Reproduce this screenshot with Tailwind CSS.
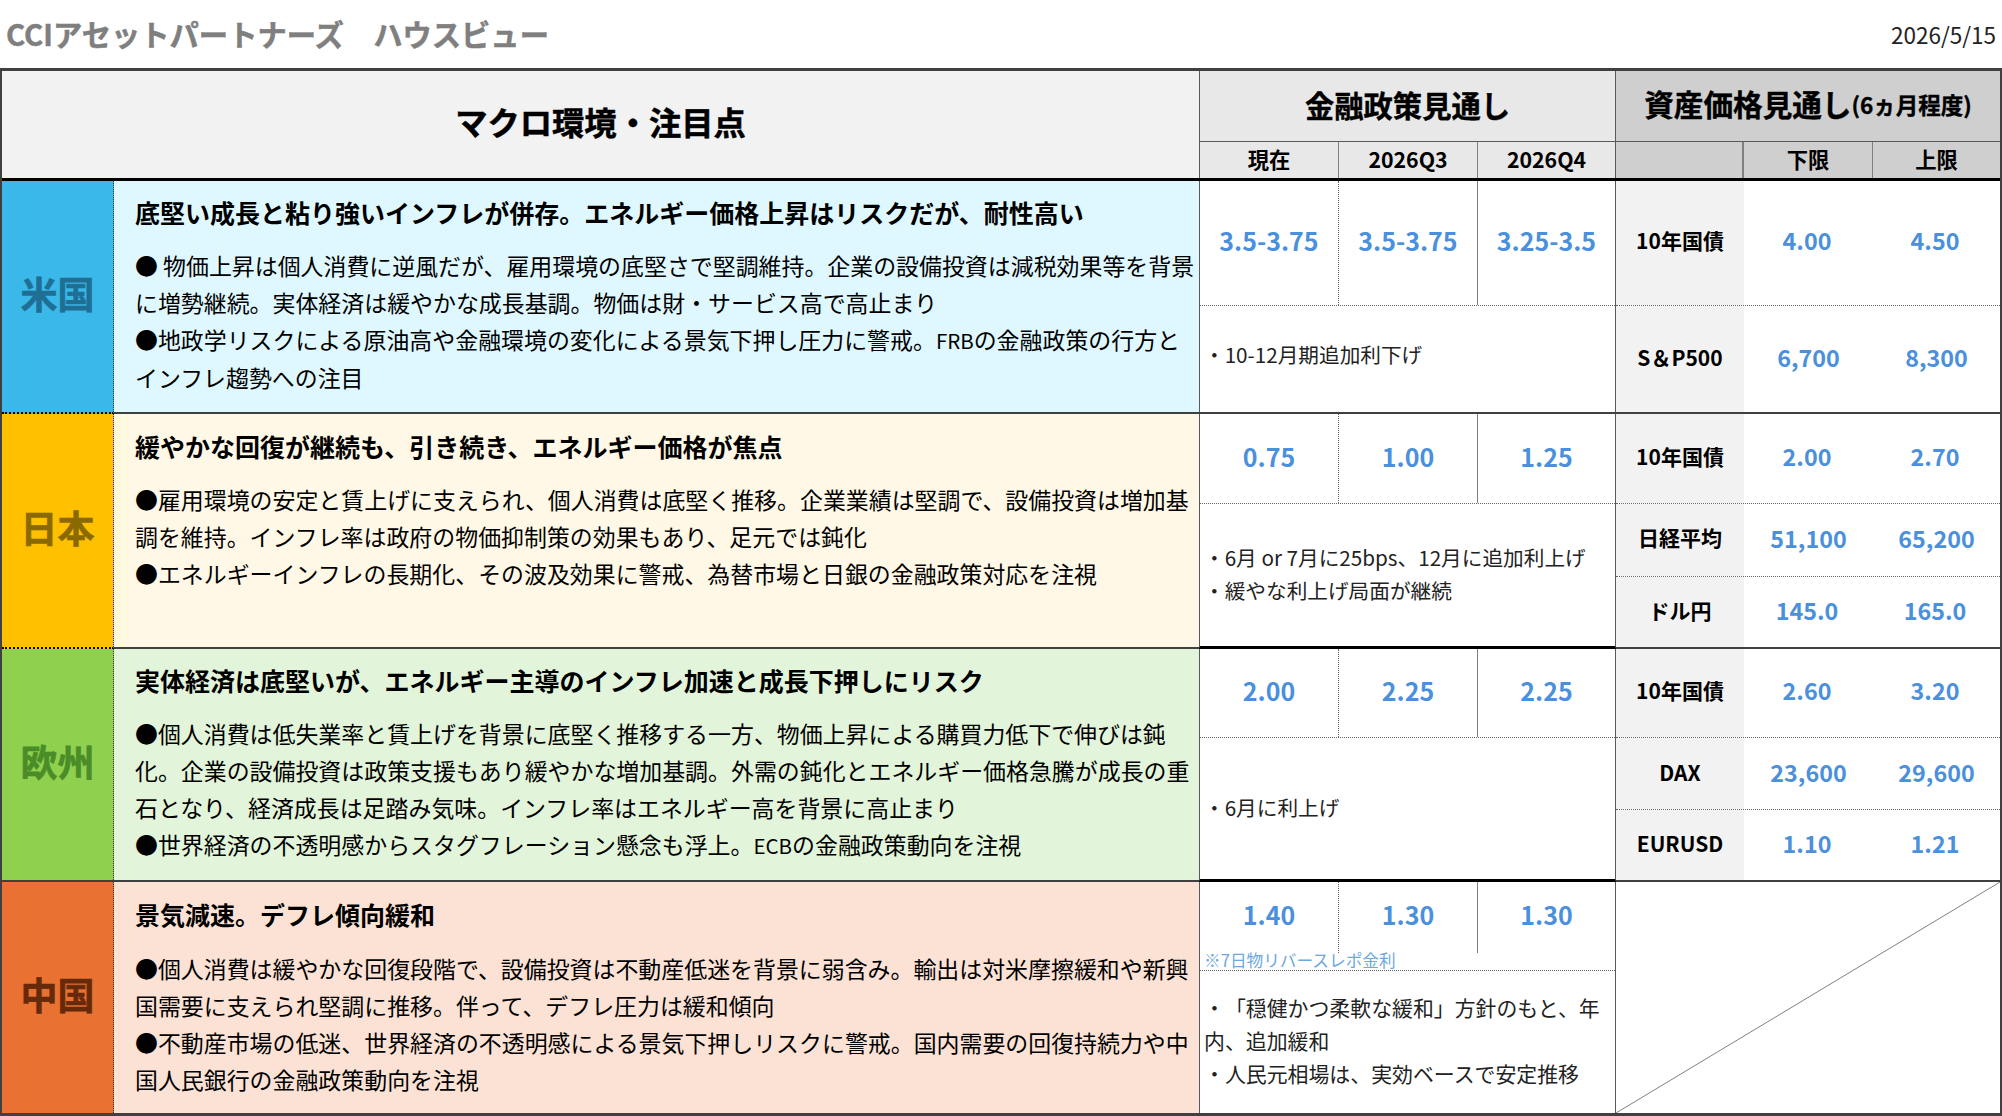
<!doctype html>
<html lang="ja">
  <head>
    <meta charset="utf-8" />
    <title>ハウスビュー</title>
    <script src="https://cdn.jsdelivr.net/npm/@tailwindcss/browser@4"></script>
  </head>
  <body class="bg-white">
    <div class="w-[2002px] h-[1116px] overflow-hidden font-['Noto_Sans_CJK_JP','Noto_Sans',sans-serif] text-black">
      <!-- title bar -->
      <div class="h-[68px] flex items-center justify-between pl-[6px] pr-[6px]">
        <div class="text-[29.3px] font-bold text-[#7f7f7f] leading-none whitespace-pre [-webkit-text-stroke:0.5px_#7f7f7f]">CCIアセットパートナーズ　ハウスビュー</div>
        <div class="text-[22.5px] text-[#222] leading-none">2026/5/15</div>
      </div>

      <!-- table -->
      <div class="h-[1048px] border-t-[3px] border-l-2 border-r-2 border-b-[3px] border-[#404040]">
        <!-- head -->
        <div class="flex h-[110px] border-b-[3px] border-black">
          <div class="w-[1198px] bg-[#f2f2f2] border-r border-[#595959] flex items-center justify-center pb-[7px] text-[32.3px] font-bold [-webkit-text-stroke:0.5px_#000]">マクロ環境・注目点</div>
          <div class="w-[416px] bg-[#e8e8e8] border-r border-[#595959] flex flex-col">
            <div class="h-[71px] flex items-center justify-center pb-[3px] text-[29.3px] font-bold border-b border-[#595959] [-webkit-text-stroke:0.4px_#000]">金融政策見通し</div>
            <div class="flex-1 grid grid-cols-[139px_139px_137px] text-[21.3px] font-bold text-center leading-[33px]">
              <div class="border-r border-[#808080]">現在</div>
              <div class="border-r border-[#808080]">2026Q3</div>
              <div>2026Q4</div>
            </div>
          </div>
          <div class="w-[384px] bg-[#cfcfcf] flex flex-col">
            <div class="h-[71px] flex items-center justify-center pb-[3px] font-bold border-b border-[#595959] text-[29.6px] whitespace-nowrap [-webkit-text-stroke:0.4px_#000]">資産価格見通し<span class="text-[22.5px]">(6ヵ月程度)</span></div>
            <div class="flex-1 grid grid-cols-[128px_129px_127px] text-[21.3px] font-bold text-center leading-[33px]">
              <div class="border-r-2 border-[#808080]"></div>
              <div class="border-r border-[#808080]">下限</div>
              <div>上限</div>
            </div>
          </div>
        </div>

        <!-- 米国 -->
        <div class="flex h-[233px] border-b-2 border-[#404040]">
          <div class="w-[112px] -mb-[2px] bg-[#3bb8ea] border-r border-dotted border-r-[#333] border-b-2 border-b-black flex items-center justify-center pb-[6px] text-[37px] font-bold text-[#1f6f94] [-webkit-text-stroke:0.6px_#1f6f94]">米国</div>
          <div class="w-[1085px] bg-[#dff8ff] pl-[21px] pt-[11px] whitespace-nowrap">
            <div class="text-[25px] font-bold leading-[40px]">底堅い成長と粘り強いインフレが併存。エネルギー価格上昇はリスクだが、耐性高い</div>
            <div class="mt-[15px] text-[22.93px] leading-[37px]">● 物価上昇は個人消費に逆風だが、雇用環境の底堅さで堅調維持。企業の設備投資は減税効果等を背景<br />に増勢継続。実体経済は緩やかな成長基調。物価は財・サービス高で高止まり<br />●地政学リスクによる原油高や金融環境の変化による景気下押し圧力に警戒。<span class="text-[20.5px]">FRB</span>の金融政策の行方と<br />インフレ趨勢への注目</div>
          </div>
          <div class="w-[417px] border-l border-r border-[#595959] flex flex-col">
            <div class="h-[125px] grid grid-cols-[139px_139px_137px] border-b border-dotted border-[#666] text-[25px] font-semibold text-[#4a90dc] text-center leading-[118px]">
              <div class="border-r border-dotted border-[#666]">3.5-3.75</div>
              <div class="border-r border-[#808080]">3.5-3.75</div>
              <div>3.25-3.5</div>
            </div>
            <div class="flex-1 flex items-center pl-[4px] pb-[10px] text-[20.67px] leading-[33px] text-[#222]">・10-12月期追加利下げ</div>
          </div>
          <div class="w-[384px] grid grid-rows-[125px_1fr] text-center">
            <div class="grid grid-cols-[128px_129px_127px] items-stretch border-b border-dotted border-[#666]">
              <div class="bg-[#f2f2f2] text-[21px] font-bold flex items-center justify-center pb-[5px]">10年国債</div>
              <div class="text-[23.3px] font-semibold text-[#4a90dc] flex items-center justify-center pb-[5px] pr-[3px]">4.00</div>
              <div class="text-[23.3px] font-semibold text-[#4a90dc] flex items-center justify-center pb-[5px] pr-[3px]">4.50</div>
            </div>
            <div class="grid grid-cols-[128px_129px_127px] items-stretch">
              <div class="bg-[#f2f2f2] text-[21px] font-bold flex items-center justify-center pb-[3px]">S＆P500</div>
              <div class="text-[23.3px] font-semibold text-[#4a90dc] flex items-center justify-center pb-[3px]">6,700</div>
              <div class="text-[23.3px] font-semibold text-[#4a90dc] flex items-center justify-center pb-[3px]">8,300</div>
            </div>
          </div>
        </div>

        <!-- 日本 -->
        <div class="flex h-[235px] border-b-2 border-[#404040]">
          <div class="w-[112px] -mb-[2px] bg-[#ffc000] border-r border-dotted border-r-[#333] border-b-2 border-b-black flex items-center justify-center pb-[6px] text-[37px] font-bold text-[#8a6a00] [-webkit-text-stroke:0.6px_#8a6a00]">日本</div>
          <div class="w-[1085px] bg-[#fff8e6] pl-[21px] pt-[12px] whitespace-nowrap">
            <div class="text-[25px] font-bold leading-[40px]">緩やかな回復が継続も、引き続き、エネルギー価格が焦点</div>
            <div class="mt-[15px] text-[22.93px] leading-[37px]">●雇用環境の安定と賃上げに支えられ、個人消費は底堅く推移。企業業績は堅調で、設備投資は増加基<br />調を維持。インフレ率は政府の物価抑制策の効果もあり、足元では鈍化<br />●エネルギーインフレの長期化、その波及効果に警戒、為替市場と日銀の金融政策対応を注視</div>
          </div>
          <div class="w-[417px] border-l border-r border-[#595959] border-b-[3px] border-b-black -mb-[2px] flex flex-col">
            <div class="h-[90px] grid grid-cols-[139px_139px_137px] border-b border-dotted border-[#666] text-[25px] font-semibold text-[#4a90dc] text-center leading-[84px]">
              <div class="border-r border-dotted border-[#666]">0.75</div>
              <div class="border-r border-[#808080]">1.00</div>
              <div>1.25</div>
            </div>
            <div class="flex-1 flex flex-col justify-center pl-[4px] pb-[2px] text-[20.67px] leading-[33px] text-[#222]">
              <div>・6月 or 7月に25bps、12月に追加利上げ</div>
              <div>・緩やな利上げ局面が継続</div>
            </div>
          </div>
          <div class="w-[384px] grid grid-rows-[90px_73px_1fr] text-center">
            <div class="grid grid-cols-[128px_129px_127px] items-stretch border-b border-dotted border-[#666]">
              <div class="bg-[#f2f2f2] text-[21px] font-bold flex items-center justify-center pb-[4px]">10年国債</div>
              <div class="text-[23.3px] font-semibold text-[#4a90dc] flex items-center justify-center pb-[4px] pr-[3px]">2.00</div>
              <div class="text-[23.3px] font-semibold text-[#4a90dc] flex items-center justify-center pb-[4px] pr-[3px]">2.70</div>
            </div>
            <div class="grid grid-cols-[128px_129px_127px] items-stretch border-b border-dotted border-[#666]">
              <div class="bg-[#f2f2f2] text-[21px] font-bold flex items-center justify-center pb-[4px]">日経平均</div>
              <div class="text-[23.3px] font-semibold text-[#4a90dc] flex items-center justify-center pb-[4px]">51,100</div>
              <div class="text-[23.3px] font-semibold text-[#4a90dc] flex items-center justify-center pb-[4px]">65,200</div>
            </div>
            <div class="grid grid-cols-[128px_129px_127px] items-stretch">
              <div class="bg-[#f2f2f2] text-[21px] font-bold flex items-center justify-center pb-[3px]">ドル円</div>
              <div class="text-[23.3px] font-semibold text-[#4a90dc] flex items-center justify-center pb-[3px] pr-[3px]">145.0</div>
              <div class="text-[23.3px] font-semibold text-[#4a90dc] flex items-center justify-center pb-[3px] pr-[3px]">165.0</div>
            </div>
          </div>
        </div>

        <!-- 欧州 -->
        <div class="flex h-[233px] border-b-2 border-[#404040]">
          <div class="w-[112px] bg-[#8fd14f] border-r border-dotted border-[#333] flex items-center justify-center pb-[6px] text-[37px] font-bold text-[#4a8c28] [-webkit-text-stroke:0.6px_#4a8c28]">欧州</div>
          <div class="w-[1085px] bg-[#e2f4da] pl-[21px] pt-[11px] whitespace-nowrap">
            <div class="text-[25px] font-bold leading-[40px]">実体経済は底堅いが、エネルギー主導のインフレ加速と成長下押しにリスク</div>
            <div class="mt-[15px] text-[22.93px] leading-[37px]">●個人消費は低失業率と賃上げを背景に底堅く推移する一方、物価上昇による購買力低下で伸びは鈍<br />化。企業の設備投資は政策支援もあり緩やかな増加基調。外需の鈍化とエネルギー価格急騰が成長の重<br />石となり、経済成長は足踏み気味。インフレ率はエネルギー高を背景に高止まり<br />●世界経済の不透明感からスタグフレーション懸念も浮上。<span class="text-[20.5px]">ECB</span>の金融政策動向を注視</div>
          </div>
          <div class="w-[417px] border-l border-r border-[#595959] border-b-[3px] border-b-black -mb-[2px] flex flex-col">
            <div class="h-[89px] grid grid-cols-[139px_139px_137px] border-b border-dotted border-[#666] text-[25px] font-semibold text-[#4a90dc] text-center leading-[83px]">
              <div class="border-r border-dotted border-[#666]">2.00</div>
              <div class="border-r border-[#808080]">2.25</div>
              <div>2.25</div>
            </div>
            <div class="flex-1 flex items-center pl-[4px] pb-[2px] text-[20.67px] leading-[33px] text-[#222]">・6月に利上げ</div>
          </div>
          <div class="w-[384px] grid grid-rows-[89px_72px_1fr] text-center">
            <div class="grid grid-cols-[128px_129px_127px] items-stretch border-b border-dotted border-[#666]">
              <div class="bg-[#f2f2f2] text-[21px] font-bold flex items-center justify-center pb-[5px]">10年国債</div>
              <div class="text-[23.3px] font-semibold text-[#4a90dc] flex items-center justify-center pb-[5px] pr-[3px]">2.60</div>
              <div class="text-[23.3px] font-semibold text-[#4a90dc] flex items-center justify-center pb-[5px] pr-[3px]">3.20</div>
            </div>
            <div class="grid grid-cols-[128px_129px_127px] items-stretch border-b border-dotted border-[#666]">
              <div class="bg-[#f2f2f2] text-[21px] font-bold flex items-center justify-center pb-[2px]">DAX</div>
              <div class="text-[23.3px] font-semibold text-[#4a90dc] flex items-center justify-center pb-[2px]">23,600</div>
              <div class="text-[23.3px] font-semibold text-[#4a90dc] flex items-center justify-center pb-[2px]">29,600</div>
            </div>
            <div class="grid grid-cols-[128px_129px_127px] items-stretch">
              <div class="bg-[#f2f2f2] text-[21px] font-bold flex items-center justify-center pb-[3px]">EURUSD</div>
              <div class="text-[23.3px] font-semibold text-[#4a90dc] flex items-center justify-center pb-[3px] pr-[3px]">1.10</div>
              <div class="text-[23.3px] font-semibold text-[#4a90dc] flex items-center justify-center pb-[3px] pr-[3px]">1.21</div>
            </div>
          </div>
        </div>

        <!-- 中国 -->
        <div class="flex h-[231px]">
          <div class="w-[112px] bg-[#e97132] border-r border-dotted border-[#333] flex items-center justify-center pb-[6px] text-[37px] font-bold text-[#662a0a] [-webkit-text-stroke:0.6px_#662a0a]">中国</div>
          <div class="w-[1085px] bg-[#fbe2d5] pl-[21px] pt-[12px] whitespace-nowrap">
            <div class="text-[25px] font-bold leading-[40px]">景気減速。デフレ傾向緩和</div>
            <div class="mt-[16px] text-[22.93px] leading-[37px]">●個人消費は緩やかな回復段階で、設備投資は不動産低迷を背景に弱含み。輸出は対米摩擦緩和や新興<br />国需要に支えられ堅調に推移。伴って、デフレ圧力は緩和傾向<br />●不動産市場の低迷、世界経済の不透明感による景気下押しリスクに警戒。国内需要の回復持続力や中<br />国人民銀行の金融政策動向を注視</div>
          </div>
          <div class="w-[417px] border-l border-r border-[#595959] flex flex-col">
            <div class="h-[71px] grid grid-cols-[139px_139px_137px] text-[25px] font-semibold text-[#4a90dc] text-center leading-[65px]">
              <div class="border-r border-dotted border-[#666]">1.40</div>
              <div class="border-r border-[#808080]">1.30</div>
              <div>1.30</div>
            </div>
            <div class="h-[17px] pl-[4px] text-[16.67px] leading-[14px] text-[#6fa8e0] border-b border-dotted border-[#666] box-content">※7日物リバースレポ金利</div>
            <div class="flex-1 pl-[4px] pt-[20px] text-[20.9px] leading-[33px] text-[#222] [text-spacing-trim:space-all]">
              <div>・「穏健かつ柔軟な緩和」方針のもと、年</div>
              <div>内、追加緩和</div>
              <div>・人民元相場は、実効ベースで安定推移</div>
            </div>
          </div>
          <div class="relative w-[384px]">
            <svg class="absolute inset-0 w-full h-full" viewBox="0 0 384 231" preserveAspectRatio="none">
              <line x1="0" y1="231" x2="384" y2="0" stroke="#808080" stroke-width="1" />
            </svg>
          </div>
        </div>
      </div>
    </div>
  </body>
</html>
